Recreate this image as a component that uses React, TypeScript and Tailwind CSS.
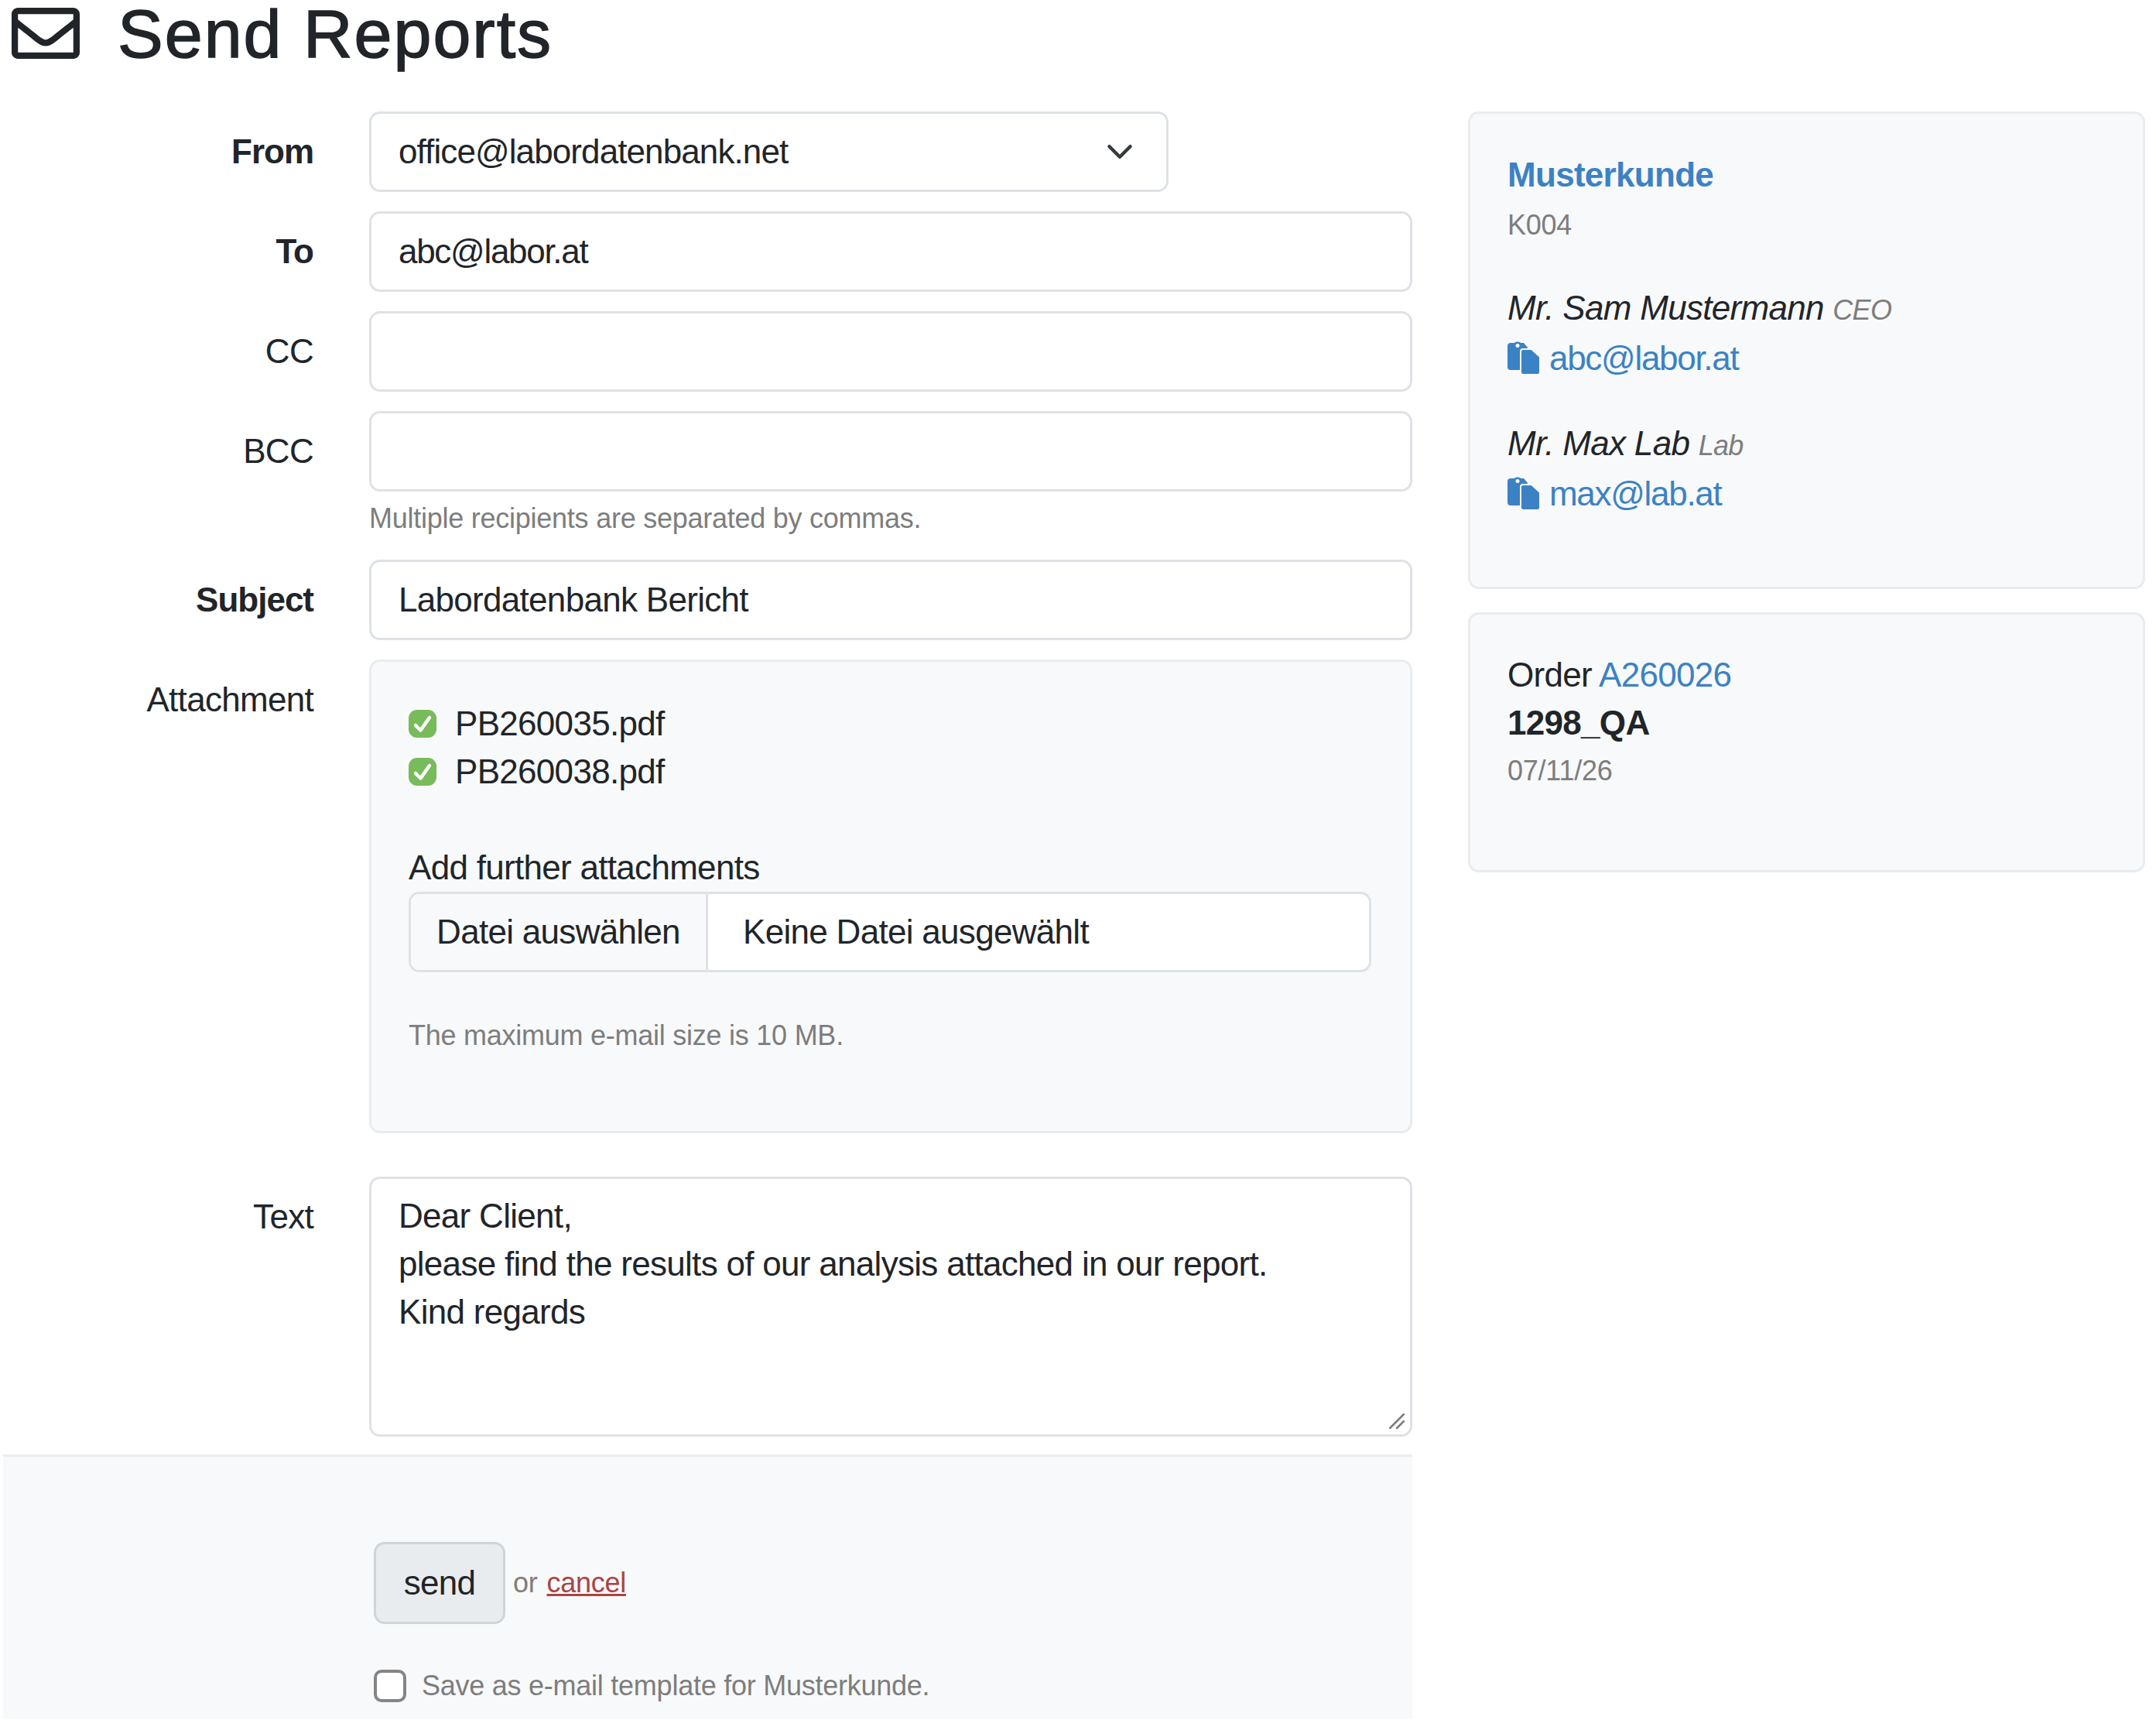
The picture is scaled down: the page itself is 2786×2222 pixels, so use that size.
import React from "react";
import { FaRegEnvelope } from "react-icons/fa";

const fieldCls = "h-[104px] rounded-[14px] border-[3px] border-[#dee2e6] bg-white px-[35px] flex items-center";

function Row({ label, bold, children, className = "" }: { label: string; bold?: boolean; children?: React.ReactNode; className?: string }) {
  return (
    <div className={`flex ${className}`}>
      <div className={`w-[405px] shrink-0 text-right pt-[25px] leading-[53px] ${bold ? "font-bold tracking-[-1px]" : ""}`}>{label}</div>
      <div className="ml-[72px] flex-1 min-w-0">{children}</div>
    </div>
  );
}

function Clip() {
  return (
    <svg viewBox="0 0 42 43" className="w-[42px] h-[43px] shrink-0 mr-[12px] mt-[-2px]" aria-hidden="true">
      <path d="M0 6a4 4 0 0 1 4-4h5c1-2 7-2 8 0h4l5 6v29H4a4 4 0 0 1-4-4z" fill="#3b82c4" />
      <circle cx="13" cy="5.5" r="2.5" fill="#f8f9fa" />
      <path d="M17 13a3 3 0 0 1 3-3h11l11 10v20a3 3 0 0 1-3 3H20a3 3 0 0 1-3-3z" fill="#3b82c4" stroke="#f8f9fa" strokeWidth="2" />
    </svg>
  );
}

function Check() {
  return (
    <svg viewBox="0 0 36 36" className="w-[36px] h-[36px] mr-[24px] shrink-0" aria-hidden="true">
      <rect width="36" height="36" rx="11" fill="#78bb5a" />
      <path d="M9 20l6.500 6.500L27 10" fill="none" stroke="#fff" strokeWidth="4.500" strokeLinecap="round" strokeLinejoin="round" />
    </svg>
  );
}

export default function App() {
  return (
    <div className="w-[2786px] h-[2222px] overflow-hidden bg-white text-[#212529] text-[44px] font-['Liberation_Sans',Arial,sans-serif] tracking-[-0.7px]">
      <h1 className="h-[144px] flex items-start pl-[15px] text-[88px] leading-[100px] tracking-[2px] [-webkit-text-stroke:1.5px_#212529]">
        <FaRegEnvelope className="w-[88px] h-[88px] text-[#212529] mt-[-1px]" />
        <span className="ml-[49px] mt-[-6px]">Send Reports</span>
      </h1>
      <div className="flex items-start">
        <div className="w-[1825px] shrink-0">
          <Row label="From" bold>
            <div className={`${fieldCls} w-[1033px] justify-between`}>
              <span className="tracking-[-0.9px]">office@labordatenbank.net</span>
              <svg viewBox="0 0 16 16" className="w-[36px] h-[36px] mr-[7px]" aria-hidden="true">
                <path d="m2 5 6 6 6-6" fill="none" stroke="#343a40" strokeWidth="2" strokeLinecap="round" strokeLinejoin="round" />
              </svg>
            </div>
          </Row>
          <Row label="To" bold className="mt-[25px]"><div className={`${fieldCls} tracking-[-1.3px]`}>abc@labor.at</div></Row>
          <Row label="CC" className="mt-[25px]"><div className={fieldCls} /></Row>
          <Row label="BCC" className="mt-[25px]">
            <div className={fieldCls} />
            <div className="mt-[13px] text-[36px] leading-[44px] tracking-[-0.25px] text-[#7d7d7d]">Multiple recipients are separated by commas.</div>
          </Row>
          <Row label="Subject" bold className="mt-[31px]"><div className={fieldCls}>Labordatenbank Bericht</div></Row>
          <Row label="Attachment" className="mt-[25px]">
            <div className="h-[612px] rounded-[14px] border-[3px] border-[#e9ecef] bg-[#f8f9fa] pl-[48px] pr-[50px] pt-[49px]">
              <div className="flex items-center h-[62px]"><Check />PB260035.pdf</div>
              <div className="flex items-center h-[62px]"><Check />PB260038.pdf</div>
              <div className="mt-[62px] leading-[62px]">Add further attachments</div>
              <div className="flex h-[104px] rounded-[14px] border-[3px] border-[#dee2e6] bg-white overflow-hidden">
                <div className="w-[384px] flex items-center justify-center bg-[#f8f9fa] border-r-[3px] border-[#dee2e6]">Datei auswählen</div>
                <div className="pl-[45px] flex items-center">Keine Datei ausgewählt</div>
              </div>
              <div className="mt-[60px] text-[36px] leading-[44px] tracking-[-0.25px] text-[#7d7d7d]">The maximum e-mail size is 10 MB.</div>
            </div>
          </Row>
          <Row label="Text" className="mt-[56px]">
            <div className="relative h-[336px] rounded-[14px] border-[3px] border-[#dee2e6] bg-white px-[35px] pt-[17px] leading-[62px]">
              <div>Dear Client,</div>
              <div>please find the results of our analysis attached in our report.</div>
              <div>Kind regards</div>
              <svg viewBox="0 0 20 20" className="absolute right-[7px] bottom-[7px] w-[20px] h-[20px]" aria-hidden="true">
                <path d="M1 19 19 1M10 19l9-9" stroke="#7d7d7d" strokeWidth="2.500" strokeLinecap="round" />
              </svg>
            </div>
          </Row>
          <div className="ml-[4px] mt-[23px] h-[342px] border-t-[3px] border-[#e9ecef] bg-[#f8f9fa] pl-[479px] pt-[110px]">
            <div className="flex items-center">
              <div className="w-[170px] h-[106px] rounded-[14px] border-[3px] border-[#ced4da] bg-[#e9ecef] flex items-center justify-center">send</div>
              <span className="ml-[10px] text-[36px] tracking-[-0.25px] text-[#7d7d7d]">or</span>
              <a className="ml-[12px] text-[36px] tracking-[-0.25px] text-[#a94442] underline">cancel</a>
            </div>
            <div className="flex items-center mt-[53px] text-[36px] tracking-[-0.25px] text-[#7d7d7d]">
              <span className="w-[42px] h-[42px] rounded-[10px] border-[4px] border-[#858585] bg-white mr-[20px]" />
              Save as e-mail template for Musterkunde.
            </div>
          </div>
        </div>
        <div className="ml-[72px] w-[875px] shrink-0">
          <div className="h-[617px] rounded-[14px] border-[3px] border-[#e9ecef] bg-[#f8f9fa] pl-[48px] pt-[48px]">
            <div className="font-bold text-[#3b82c4] leading-[62px]">Musterkunde</div>
            <div className="text-[36px] leading-[62px] text-[#7d7d7d] mt-[3px] tracking-[-0.25px]">K004</div>
            <div className="mt-[45px] italic leading-[62px]">Mr. Sam Mustermann <span className="text-[36px] text-[#7d7d7d]">CEO</span></div>
            <div className="flex items-center h-[62px] text-[#3b82c4] tracking-[-1.3px]"><Clip />abc@labor.at</div>
            <div className="mt-[48px] italic leading-[62px]">Mr. Max Lab <span className="text-[36px] text-[#7d7d7d]">Lab</span></div>
            <div className="flex items-center h-[62px] text-[#3b82c4] tracking-[-1.3px]"><Clip />max@lab.at</div>
          </div>
          <div className="mt-[30px] h-[336px] rounded-[14px] border-[3px] border-[#e9ecef] bg-[#f8f9fa] pl-[48px] pt-[47px]">
            <div className="leading-[62px]">Order <span className="text-[#3b82c4]">A260026</span></div>
            <div className="font-bold leading-[62px]">1298_QA</div>
            <div className="text-[36px] leading-[62px] tracking-[-0.25px] text-[#7d7d7d]">07/11/26</div>
          </div>
        </div>
      </div>
    </div>
  );
}
